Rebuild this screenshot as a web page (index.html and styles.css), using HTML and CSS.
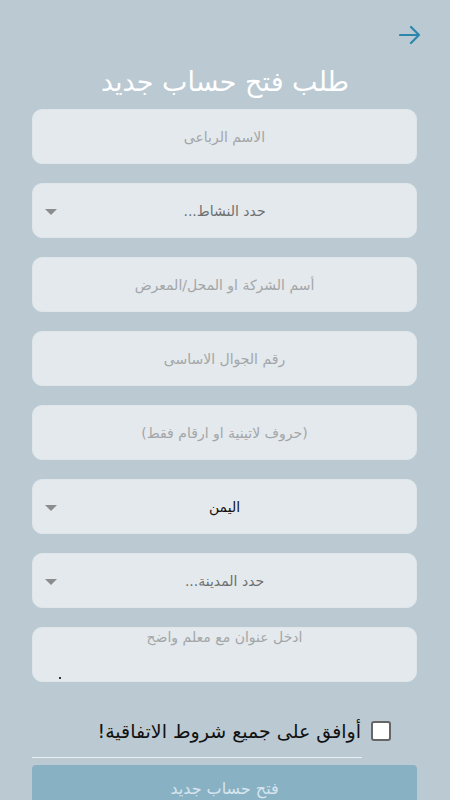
FILE: index.html
```html
<!DOCTYPE html>
<html lang="ar" dir="rtl">
<head>
<meta charset="utf-8">
<link rel="stylesheet" href="styles.css">
</head>
<body>
<div class="page">
  <div class="topbar">
    <svg class="back" width="22" height="20" viewBox="0 0 22 20"><path d="M1 10H20M12 2L20 10L12 18" fill="none" stroke="#2d87ad" stroke-width="2.2" stroke-linecap="round" stroke-linejoin="round"/></svg>
  </div>
  <h1 class="title">طلب فتح حساب جديد</h1>
  <div class="fields">
    <div class="field"><span class="ph">الاسم الرباعى</span></div>
    <div class="field select"><span class="sel">حدد النشاط...</span><span class="caret"></span></div>
    <div class="field"><span class="ph">أسم الشركة او المحل/المعرض</span></div>
    <div class="field"><span class="ph">رقم الجوال الاساسى</span></div>
    <div class="field"><span class="ph">(حروف لاتينية او ارقام فقط)</span></div>
    <div class="field select"><span class="sel val">اليمن</span><span class="caret"></span></div>
    <div class="field select"><span class="sel">حدد المدينة...</span><span class="caret"></span></div>
    <div class="field area"><span class="ph">ادخل عنوان مع معلم واضح</span><span class="grip"></span></div>
  </div>
  <label class="agree"><span class="box"></span><span class="agree-text">أوافق على جميع شروط الاتفاقية!</span></label>
  <div class="rule"></div>
  <div class="submit">فتح حساب جديد</div>
</div>
</body>
</html>
```
FILE: styles.css
```css
html, body {
  margin: 0;
  padding: 0;
  background: #bac9d2;
  font-family: "DejaVu Sans", "Noto Sans", sans-serif;
  overflow: hidden;
}
.page {
  width: 450px;
  height: 800px;
  box-sizing: border-box;
  padding: 25px 0 0;
  display: flex;
  flex-direction: column;
}
.page > * {
  flex-shrink: 0;
}
.topbar {
  height: 20px;
  display: flex;
  justify-content: flex-start;
  padding-right: 29px;
}
.title {
  margin: 17px 0 0;
  height: 47px;
  text-align: center;
  color: #ffffff;
  font-weight: normal;
  font-size: 27px;
  line-height: 40px;
}
.fields {
  display: flex;
  flex-direction: column;
  gap: 19px;
  padding: 0 33px 0 32px;
}
.field {
  height: 55px;
  flex-shrink: 0;
  background: #e4e9ed;
  border: 1px solid #dfe6ea;
  box-sizing: border-box;
  border-radius: 10px;
  display: flex;
  align-items: center;
  justify-content: center;
  position: relative;
}
.ph {
  color: #a3a6a8;
  font-size: 14px;
}
.sel {
  color: #6d6f71;
  font-size: 14px;
}
.sel.val {
  color: #111;
}
.caret {
  position: absolute;
  left: 12px;
  top: 50%;
  margin-top: -2px;
  width: 0;
  height: 0;
  border-left: 6px solid transparent;
  border-right: 6px solid transparent;
  border-top: 6px solid #8a8c8e;
}
.field.area {
  align-items: flex-start;
  padding-top: 1px;
}
.grip {
  position: absolute;
  left: 26px;
  bottom: 2px;
  width: 2px;
  height: 2px;
  background: #333;
}
.agree {
  margin-top: 37px;
  display: flex;
  align-items: center;
  gap: 10px;
  padding-right: 59px;
  height: 24px;
}
.box {
  width: 16px;
  height: 16px;
  border: 2px solid #666;
  border-radius: 3px;
  background: #fff;
}
.agree-text {
  color: #111;
  font-size: 19px;
}
.rule {
  margin: 14px 88px 0 32px;
  height: 1px;
  background: #e9eef1;
}
.submit {
  margin: 7px 33px 0 32px;
  height: 46px;
  background: #89b1c4;
  border-radius: 4px;
  color: #d6e5ee;
  font-size: 16px;
  display: flex;
  align-items: center;
  justify-content: center;
}
```
